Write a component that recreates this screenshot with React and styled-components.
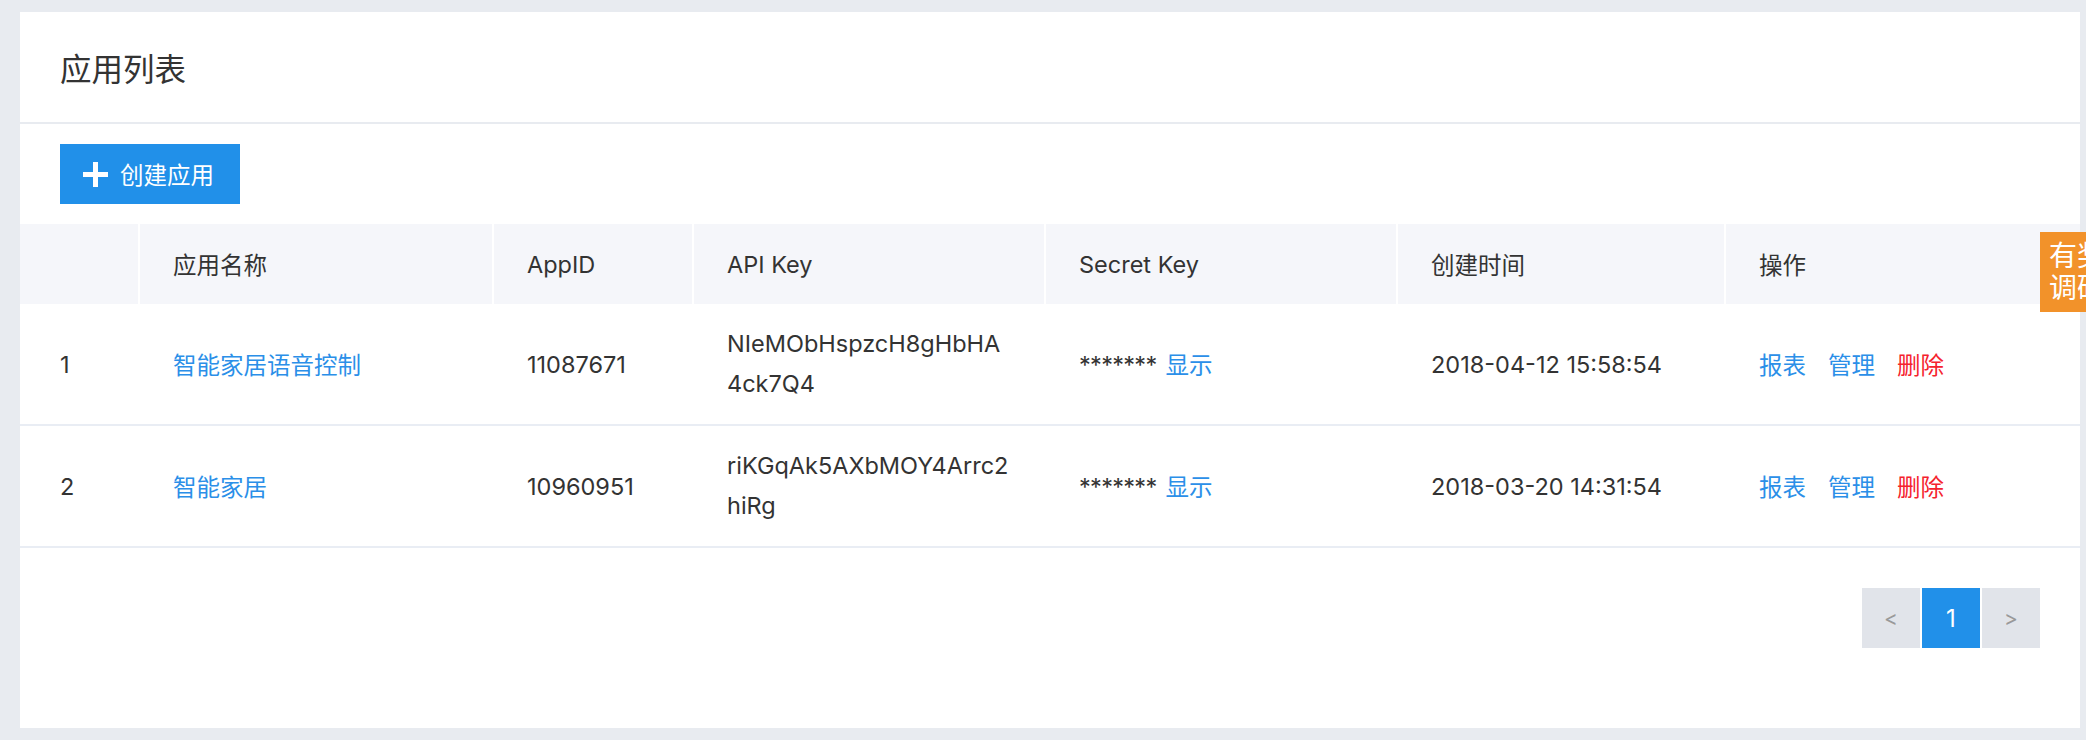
import React from "react";
import styled, { createGlobalStyle } from "styled-components";

const GlobalStyle = createGlobalStyle`
  body {
    margin: 0;
    background: #e8ebf0;
    font-family: Inter, "Noto Sans CJK SC", sans-serif;
    color: #333333;
  }
`;

const apps = [
  {
    id: 1,
    name: "智能家居语音控制",
    appId: "11087671",
    apiKey: ["NIeMObHspzcH8gHbHA", "4ck7Q4"],
    created: "2018-04-12 15:58:54",
  },
  {
    id: 2,
    name: "智能家居",
    appId: "10960951",
    apiKey: ["riKGqAk5AXbMOY4Arrc2", "hiRg"],
    created: "2018-03-20 14:31:54",
  },
];

const columns = ["", "应用名称", "AppID", "API Key", "Secret Key", "创建时间", "操作"];

function App() {
  return (
    <Page>
      <GlobalStyle />
      <Card>
        <Title>应用列表</Title>
        <Toolbar>
          <CreateButton>
            <svg width="25" height="25" viewBox="0 0 25 25">
              <rect x="10" y="0" width="5" height="25" fill="#ffffff" />
              <rect x="0" y="10" width="25" height="5" fill="#ffffff" />
            </svg>
            创建应用
          </CreateButton>
        </Toolbar>
        <Table>
          <HeadRow>
            {columns.map((c, i) => (
              <HeadCell key={i} first={i === 0} last={i === columns.length - 1}>
                {c}
              </HeadCell>
            ))}
          </HeadRow>
          {apps.map((app) => (
            <BodyRow key={app.id}>
              <Cell first>{app.id}</Cell>
              <Cell>
                <Link>{app.name}</Link>
              </Cell>
              <Cell>{app.appId}</Cell>
              <Cell>
                <KeyText>
                  {app.apiKey.map((part) => (
                    <span key={part}>{part}</span>
                  ))}
                </KeyText>
              </Cell>
              <Cell>
                <Secret>*******</Secret>
                <Link>显示</Link>
              </Cell>
              <Cell>{app.created}</Cell>
              <Cell>
                <Action>报表</Action>
                <Action>管理</Action>
                <Action danger>删除</Action>
              </Cell>
            </BodyRow>
          ))}
        </Table>
        <Pager>
          <PageButton>&lt;</PageButton>
          <PageButton active>1</PageButton>
          <PageButton>&gt;</PageButton>
        </Pager>
      </Card>
      <SurveyTab>有奖调研</SurveyTab>
    </Page>
  );
}

export default App;

const Page = styled.div`
  padding: 12px 6px 12px 20px;
  height: 716px;
`;

const Card = styled.div`
  background: #ffffff;
  height: 716px;
`;

const Title = styled.div`
  height: 110px;
  display: flex;
  align-items: center;
  padding-left: 40px;
  font-size: 31.5px;
  color: #333333;
  border-bottom: 2px solid #e8ebf0;
`;

const Toolbar = styled.div`
  padding: 20px 40px;
`;

const CreateButton = styled.button`
  display: flex;
  align-items: center;
  gap: 12px;
  width: 180px;
  height: 60px;
  padding: 0 0 0 23px;
  border: none;
  background: #2190e9;
  color: #ffffff;
  font-family: Inter, "Noto Sans CJK SC", sans-serif;
  font-size: 23.5px;
  cursor: pointer;
`;

const Table = styled.div`
  font-size: 23.5px;
`;

const grid = `
  display: grid;
  grid-template-columns: 120px 354px 200px 352px 352px 328px 1fr;
`;

const HeadRow = styled.div`
  ${grid}
  height: 80px;
  background: #f5f6fa;
`;

const HeadCell = styled.div`
  display: flex;
  align-items: center;
  padding-left: ${(p) => (p.first ? "40px" : "33px")};
  border-right: ${(p) => (p.last ? "none" : "2px solid #ffffff")};
  color: #333333;
`;

const BodyRow = styled.div`
  ${grid}
  height: 120px;
  border-bottom: 2px solid #e9edf4;
`;

const Cell = styled.div`
  display: flex;
  align-items: center;
  padding-left: ${(p) => (p.first ? "40px" : "33px")};
  padding-right: 33px;
  color: #333333;
`;

const Link = styled.span`
  color: #2b8fe8;
  cursor: pointer;
`;

const KeyText = styled.div`
  display: flex;
  flex-direction: column;
  line-height: 40px;
`;

const Secret = styled.span`
  margin-right: 9px;
  letter-spacing: -0.7px;
`;

const Action = styled.span`
  color: ${(p) => (p.danger ? "#f5222d" : "#2b8fe8")};
  margin-right: 22px;
  cursor: pointer;
`;

const Pager = styled.div`
  display: flex;
  justify-content: flex-end;
  gap: 2px;
  padding: 40px 40px 0 0;
`;

const PageButton = styled.div`
  width: 58px;
  height: 60px;
  display: flex;
  align-items: center;
  justify-content: center;
  background: ${(p) => (p.active ? "#2190e9" : "#e1e4ea")};
  color: ${(p) => (p.active ? "#ffffff" : "#999999")};
  font-size: ${(p) => (p.active ? "24px" : "21px")};
  cursor: pointer;
`;

const SurveyTab = styled.div`
  position: fixed;
  top: 232px;
  right: -28px;
  width: 56px;
  height: 80px;
  padding: 0 9px;
  display: flex;
  align-items: center;
  background: #f2922a;
  color: #ffffff;
  font-size: 28px;
  line-height: 32px;
  word-break: break-all;
`;
